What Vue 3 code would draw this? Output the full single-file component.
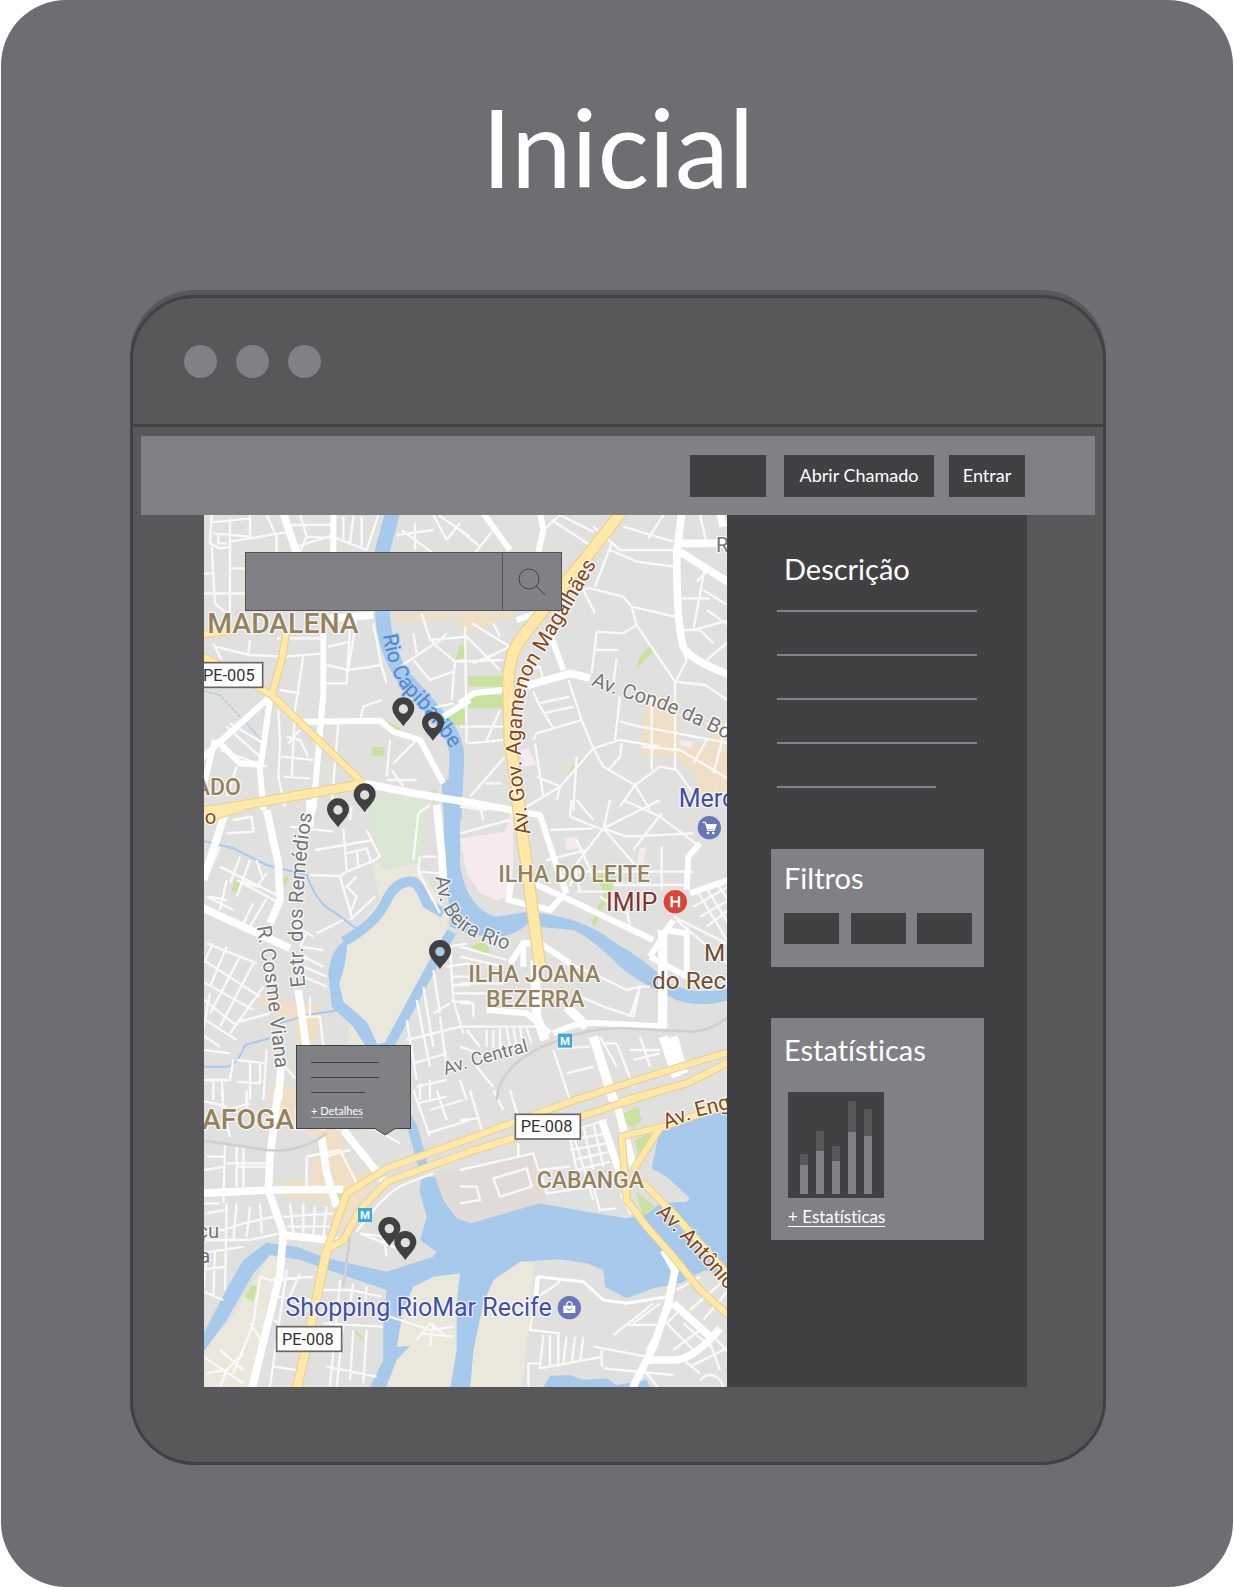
<script setup>
// Map artwork is drawn in six sheets; each entry is the sheet's origin.
const sheets = {
  a: [-12, -15], b: [768, -15],
  c: [-12, 855], d: [768, 855],
  e: [-12, 1725], f: [768, 1725],
}
const place = (s) => `translate(${sheets[s][0]} ${sheets[s][1]})`

// [kind, sheet, path data]
const areas = [
  ['sand', 'c', 'M515 180 L560 210 650 190 740 330 745 400 700 490 560 740 H445 V680 L415 550 440 420 540 300z'],
  ['sand', 'e', 'M210 495 L245 510 200 640 165 890 H0 V790 L90 690z M640 590 L700 560 780 550 770 640 775 780 750 890 H555 L590 800 600 680z'],
  ['sand', 'f', 'M100 570 L180 515 222 518 205 720 185 890 H28 L40 780 70 640z'],
  ['clay', 'e', 'M705 260 L1010 190 1020 250 1040 300 1020 345 880 380 800 400 760 380z'],
  ['tan', 'a', 'M580 315 L800 305 H940 V318 L880 330 L855 365 L830 345 L800 365 775 350 780 320 700 335 590 335z'],
  ['tan', 'b', 'M560 545 L660 570 655 690 740 710 780 630 805 640 V870 L700 850 710 800 640 740 540 735z'],
  ['tan', 'c', 'M170 600 L230 585 290 620 360 610 V660 L340 740 H290 L285 670 230 640z M210 850 L250 870 H290 V900 H210z'],
  ['tan', 'e', 'M225 -10 H290 V60 L330 120 H420 L440 190 470 260 545 220 530 260 460 370 430 420 385 400 400 340 270 325 240 300 245 275 330 270 340 210 380 170 300 110 230 60z'],
  ['pink', 'd', 'M0 115 L135 95 160 10 V200 L145 290 110 300 60 280 20 220z M315 115 L350 110 355 145 320 150z M540 145 L560 140 550 190 530 190z'],
  ['pink', 'b', 'M180 720 L205 715 230 765 190 770z M655 690 L700 695 695 715 660 705z'],
  ['park', 'c', 'M500 -10 H690 L655 185 570 210 530 140z'],
  ['green', 'b', 'M25 498 H130 V530 H25z M25 570 L60 555 H130 V595 H25z M570 408 L580 425 528 475 540 440z M325 795 L335 770 370 745z M0 400 L12 410 V450 L-15 455z M-45 610 L12 595 V645 H-20z'],
  ['green', 'a', 'M555 630 L605 658 580 663z M515 710 H553 V738 H515z M770 450 L800 390 V450z M735 625 L795 600 V645 H755z M700 835 L712 845 698 890z'],
  ['green', 'c', 'M95 270 L105 235 124 250 108 280z M250 232 L265 228 262 250 250 257z'],
  ['green', 'd', 'M405 215 L455 205 470 240 435 310 405 380 395 370 430 280z M30 440 L70 425 90 450 85 465z M300 555 L330 580 305 575z'],
  ['green', 'e', 'M135 620 L155 585 172 590 160 635z M410 310 L430 305 420 330z M450 712 L500 750 480 745z'],
  ['green', 'f', 'M490 70 L535 50 545 90 520 112 490 95z M525 150 L595 115 535 200z M525 300 L585 350 550 382z'],
  ['water', 'd', 'M-55 -60 H0 V200 Q25 330 110 350 L205 335 Q370 350 460 425 Q560 480 620 545 Q700 590 805 565 V600 Q720 625 650 600 Q540 550 480 500 Q390 410 340 390 L250 382 L205 370 Q160 410 110 410 Q30 410 -30 380z'],
  ['water', 'c', 'M440 420 Q445 470 418 550 L430 605 500 665 545 760 H510 L460 680 395 620 385 520 Q395 440 440 420z'],
  ['water', 'e', 'M0 750 L90 580 130 510 200 458 290 470 380 505 560 545 700 500 710 485 660 450 680 380 658 300 665 260 705 260 730 330 770 385 810 400 880 380 1020 340 1160 365 1280 385 1350 370 1420 400 1515 540 1440 580 1360 595 1280 625 1215 590 1210 540 1160 520 1080 508 960 515 880 570 850 640 820 780 810 900 H750 L770 780 770 640 780 550 700 560 640 590 610 660 590 770 630 768 590 810 555 900 H505 L550 810 550 700 560 600 400 545 300 510 210 495 160 550 80 690 0 800z'],
  ['water', 'f', 'M600 115 L805 60 V560 L730 540 555 378 600 340 680 335 690 325 625 265 575 235z M245 900 L270 858 330 855 370 870 440 865 470 885 560 870 575 900z'],
]

const streams = [
  ['w45', 'a', 'M580 0 L545 130 548 320 Q555 420 610 500 Q700 600 740 650 Q775 700 770 760 L762 930'],
  ['w45', 'c', 'M757 10 L752 180 Q760 300 810 360'],
  ['w30', 'c', 'M755 395 L700 490 560 750'],
  ['w30', 'c', 'M430 425 Q530 370 560 300 Q590 240 640 245 Q660 255 680 310 L730 340'],
  ['w30', 'e', 'M545 -140 L580 0 640 120 670 230'],
  ['w6', 'c', 'M0 120 L100 145 200 195 320 225 Q350 310 400 335 L475 390 M420 630 L320 645 240 670 M210 715 L135 735 Q110 800 80 800 H0'],
  ['w3', 'a', 'M0 540 L60 555 120 620 185 690'],
]

const minor = [
  ['a', 'M35 10 L30 100 60 115 90 110 M30 38 L150 25 M90 35 V310 M150 15 V80 L40 70 M90 175 H135 M0 250 H140 M0 190 L35 190 M35 110 L45 280 90 320 M55 70 V100 H80 M200 15 L230 80 230 125 M90 95 L270 65 M265 45 H395 M300 15 L320 80 300 125 M290 110 L400 75 M320 80 L410 85 500 120 M430 20 V90 M460 20 L450 100 M485 20 V110 M535 15 L500 120 M590 75 L700 60 M645 40 V120 M605 60 L700 130 M700 15 L740 90 M715 15 L810 80 M780 40 L740 90'],
  ['a', 'M40 400 L65 450 M45 410 L150 435 250 440 M150 390 L145 430 M230 385 H370 M255 440 L375 430 M310 440 L285 600 275 800 M240 540 L300 550 M385 410 L450 395 M380 465 L445 480 545 465 M450 350 L440 520 375 520 M470 320 L445 480 M520 340 L545 470 560 520 M545 570 L490 590 480 630 M415 640 L405 760 395 890 M300 660 L265 700 M80 650 L180 740 M90 640 L190 700 M260 680 L300 690 325 740 M235 600 L240 700 235 800 255 890 M245 740 L340 750 M250 800 L330 805 M110 770 L80 860 M60 720 L200 770 M570 690 L560 800 M580 760 L650 690 M560 810 H650 M575 780 L610 830'],
  ['a', 'M665 310 L690 390 800 380 M690 390 L705 400 600 470 M705 405 L765 455 795 450 M640 370 L650 430 M640 450 L690 510 760 485 M765 455 L755 570 M690 595 L760 580 M710 400 L740 370'],
  ['b', 'M0 60 L60 110 95 65 M60 110 L45 130 M250 60 L300 15 M275 30 L390 105 M300 15 L400 65 M400 50 L480 120 H645 M490 50 L640 95 M565 85 L610 15 M450 120 L530 155 645 170 M455 100 L405 230 M310 240 L390 235 490 260 515 290 645 320 M370 240 L405 310 M515 290 L530 345 645 515 M530 345 L490 370 410 365 395 490 M405 420 H475 M470 445 L460 520 M645 515 L735 525 810 575 M660 400 L680 450 645 520 V780 M720 15 L740 100 M735 170 L700 360 M660 265 H750 M700 360 L810 330 M730 240 L810 290 M660 360 H720 L760 400 M740 300 L805 345 M740 450 L805 395 M710 215 L740 185'],
  ['b', 'M0 455 L130 450 M15 350 L20 700 M35 340 L150 410 M20 380 L120 480 M40 460 L130 420 M70 450 L150 410 M0 650 H135 M25 700 L130 690 M120 600 L80 690 M135 740 L30 860 M75 820 H125 M210 480 L240 470 250 510 M220 545 L235 580 280 655 M235 580 L330 560 M250 610 L340 590 M220 690 L230 670 365 630 M325 510 L365 630 400 715 M400 715 L480 690 600 710 M400 715 L300 830 200 890 M400 715 L430 770 525 825 480 890 M485 700 L480 740 445 780 M480 560 L465 690 M480 635 L560 655 M525 825 L600 770 650 780 M525 825 L570 900 M350 740 L340 900 M225 700 L250 860 M230 800 L300 830 290 870 M700 850 L650 780 M100 340 L120 380 M575 560 V780 M545 650 L810 700 M545 710 L660 720 810 810 M740 640 L805 670 M700 760 L740 690 M760 790 L800 640'],
  ['c', 'M80 100 L160 95 155 50 100 60 M170 180 L190 240 M60 140 L20 230 M60 200 L240 290 M120 170 L90 250 M150 180 L110 290 M200 220 L170 260 130 245 M80 240 L60 330 M20 290 L100 330 M200 295 L150 380 M160 310 L130 370 M110 240 L240 310 M30 290 L80 300 M270 80 L400 95 M330 80 L345 30 M345 150 L520 120 M430 85 L440 210 M440 160 L500 145 515 190 M470 150 L475 200 M500 90 L540 170 515 185 440 215 420 228 330 225 M420 230 L455 350 M450 60 L455 20 M470 230 L440 260 470 290 450 340 M525 290 L450 360 M660 170 L655 215 720 220 M665 170 H710 M640 180 L655 40 690 15 M655 215 L720 340'],
  ['c', 'M20 430 L170 490 M10 480 L180 590 M0 540 L160 630 M0 590 L100 670 210 640 M0 650 L110 720 M0 700 L60 740 M40 430 L10 490 M80 440 L30 560 M120 470 L30 640 M160 490 L60 680 M190 560 L90 700 M30 580 L10 690 M310 340 L290 380 340 410 M300 440 L370 450 M310 470 L370 500 M310 500 L380 530 M310 530 L380 560 M320 400 L300 440 M350 400 L430 360 M330 590 V650 M360 650 L370 740 M300 650 H360 M10 750 L90 760 M40 840 V900 M65 840 L70 900 M10 840 H90 L100 780 M110 780 L200 790 M150 790 V900 M180 790 V850 L110 845 M200 750 L190 900 M255 800 L285 835'],
  ['c', 'M750 440 L800 430 M750 440 L760 600 790 700 M740 500 L810 490 M755 530 H810 M755 555 H810 M755 580 H810 M755 605 H810 M750 610 L700 640 M700 510 L720 640 M670 560 L700 740 M650 600 L690 800 M620 660 L650 840 M720 650 L740 800 M620 720 L780 680 M640 790 L740 760 M660 850 V900 M690 840 V900 M650 860 L740 840'],
  ['d', 'M0 20 L80 30 M60 20 L70 60 M0 100 L150 60 M335 0 L330 50 M330 50 L430 90 450 0 M270 90 L400 85 M430 85 L350 190 330 260 M430 85 L530 200 M430 85 L600 0 M430 85 L500 110 700 100 M350 120 L400 230 M400 60 L350 0 M490 0 L600 50 M605 40 L520 150 M600 50 L720 140 M605 140 V270 M260 180 L380 150 M310 215 H700 M350 275 H440 M360 275 L345 200 M460 255 H690 M500 330 L510 380 M420 290 L500 340 M640 350 L800 430 M620 390 L600 480 M650 360 L800 490 M710 270 L800 420 M740 265 L805 370 M700 320 L805 260 M720 350 L805 300 M740 380 L805 330 M770 250 L805 300'],
  ['d', 'M330 490 L440 540 500 570 540 560 520 650 430 620 340 580 M540 560 H570 M510 650 L540 560 M0 440 L140 480 M0 470 L130 500 M0 550 H130 M0 580 H80 M0 610 L40 610 V650 M0 680 H250 M80 690 V740 M100 690 V745 M120 685 V745 M140 685 L150 740 M160 685 L170 740 M180 685 L190 740 M200 685 L215 730 M20 690 L60 740 M0 740 L60 760 M280 750 L330 900 M290 745 L390 740 M470 730 L520 860 M420 710 L470 800 M430 730 H470 M510 750 H600 M520 780 L600 760 M540 710 L570 800 M0 840 L20 900 M50 800 L100 860 M320 820 L400 800'],
  ['e', 'M75 165 L70 340 M12 240 L75 230 M20 200 H70 M110 170 V290 M130 170 V290 M80 220 H200 M110 230 H205 M0 30 L80 50 M65 0 L70 60 90 140 M140 0 V60 M80 60 L150 40 M320 200 V290 M320 200 L420 180 470 280 M375 200 L450 180 M420 60 L600 160 M640 0 L690 140 M680 130 L810 90 M650 40 L740 20 M690 60 L790 30 M710 0 L740 90'],
  ['e', 'M10 340 H60 M20 370 L75 360 M10 420 L70 420 130 400 220 380 M80 340 L75 600 M110 340 L100 450 M150 350 L140 440 M180 340 L185 430 M0 450 L150 450 240 430 M0 490 L130 470 M0 540 L80 530 M20 500 L10 600 M45 480 L40 620 M0 600 L70 630 M250 380 L400 370 M270 340 L280 430 M310 340 V430 M345 350 L340 440 M260 410 H390 M380 350 L370 440 M180 560 L160 700 100 850 M180 560 L210 570 340 560 M260 540 L210 890 M300 550 L260 640 M230 620 L340 630 M220 690 L240 700 M150 700 L190 760 M20 850 L80 840 130 790 M60 780 L130 840 M10 800 L130 880 M80 840 L60 890 M220 780 L300 770 M220 830 L290 840 M340 600 L450 600 545 620 M420 570 L390 890 M460 580 L450 640 M500 590 L495 640 M370 700 L550 710 M430 700 L410 890 M380 830 L530 860 M460 720 L450 870 M500 720 L490 880 M480 430 L550 440 560 500 M480 430 L630 490 M470 425 Q560 300 620 280 L700 250'],
  ['e', 'M570 680 L690 720 760 710 M650 750 L690 700 740 740 M660 730 L760 740 M700 700 L690 770'],
  ['f', 'M0 90 L60 85 M30 0 L65 120 M100 0 L130 60 M150 0 L180 100 M175 160 V200 M0 240 L220 190 235 240 330 230 M100 265 L200 235 215 290 120 320z M0 290 L50 290 60 330 0 340 M330 100 L400 330 M340 120 L440 90 M330 150 L440 130 M330 180 L440 160 M340 210 L450 185 M350 240 L450 215 M370 110 L400 240 M400 100 L430 230 M240 240 L260 310 400 290 M400 290 L420 360 470 355 M330 145 L350 240 M230 560 L210 720 300 730 M235 620 L300 575'],
  ['f', 'M250 735 L240 835 430 800 M270 735 V830 M295 735 V830 M320 740 L310 820 M345 740 L335 820 M370 740 L360 815 M205 900 V820 H240 M400 770 L560 800 M425 780 V830 M430 835 L640 855 M460 735 L580 640 M520 700 L600 640 M505 705 H590 M600 680 L700 780 M640 640 L560 780 M620 700 L670 650 M640 780 L720 720 M670 700 L750 770 M690 830 L810 770 M670 810 L720 850 M730 690 L805 600 M690 660 L805 560 M650 600 L720 560 M750 730 L810 790 M750 760 L780 840 M720 870 Q750 840 780 870 L790 890 M560 850 L600 900'],
]

const roads = [
  ['r14', 'a', 'M400 10 V130 M370 370 V550 L340 900 M210 570 L180 780 190 900 M0 750 L210 560 M45 690 L10 830 M50 690 L120 760 190 765 M310 635 L540 632 580 665 660 690 730 820 M730 620 L810 570'],
  ['r20', 'a', 'M250 10 L290 130 M390 325 L520 315 M490 820 L640 850 820 880'],
  ['r14', 'b', 'M70 10 L150 120 M240 10 L250 60 235 125 M0 870 L160 900 M0 580 L40 550 130 540 M170 330 L230 310 M270 370 L310 480'],
  ['r20', 'b', 'M190 530 L330 490 390 505 M665 10 L650 130 Q650 350 670 410 Q690 450 810 495 M660 100 L810 100 M660 125 L810 220 M780 10 L790 50'],
  ['r20', 'c', 'M75 40 L10 240 M0 320 L270 445 M200 30 L235 190 240 300 210 370 M330 0 V80 M295 570 L320 750 M245 780 L235 900 M710 15 L725 160 730 240'],
  ['r14', 'd', 'M0 5 L150 30 240 45 290 200 320 280 M220 250 L330 300 580 420 M155 240 L145 300 270 330 310 285 M690 280 L805 240 M720 130 L685 170 680 270 M570 470 L640 360 M570 470 L680 530 V400 L610 390 M150 490 L190 430 H240 L330 490 M190 440 V500 M80 630 L200 640 270 700'],
  ['r26', 'd', 'M608 390 V680 M640 710 L670 820 M610 710 L650 830'],
  ['r26', 'd', 'M225 480 L230 650 255 720 M320 620 L380 680 M400 710 L460 900'],
  ['r14', 'd', 'M280 700 Q360 660 430 670 L620 680'],
  ['r20', 'e', 'M235 0 L210 200 205 300 250 430 240 550 155 900 M0 310 L205 300 430 298 M365 140 L380 250 410 350 M250 435 L430 455 M430 120 L530 245 M545 265 L560 290'],
  ['r20', 'f', 'M455 20 L470 40 520 230 M425 90 L480 250 M490 310 L520 370 M610 480 L645 540 625 640 580 770 515 900 M640 640 L750 740 M560 810 H650 Q710 800 780 715'],
  ['r8', 'f', 'M230 620 L235 560 370 575 430 630 500 640 620 620'],
  ['rail', 'd', 'M110 900 Q120 780 300 720 Q400 680 500 685 L700 695 Q760 690 805 650'],
  ['rail', 'e', 'M0 150 L200 180 Q300 190 380 130 M450 440 L430 590'],
]

const highways = [
  ['h22', 'a', 'M0 435 L90 480 215 555 490 820 M0 375 L110 360 M258 370 L245 450 215 555'],
  ['h30', 'a', 'M0 905 L130 885 490 822'],
  ['h30', 'c', 'M0 58 L130 20'],
  ['h36', 'b', 'M485 5 L380 140 290 250 180 390 Q145 440 145 520 L150 700 180 900'],
  ['h36', 'd', 'M170 -10 L195 160 240 500'],
  ['h22', 'd', 'M330 905 L580 825 810 755 M480 905 L680 850 810 785'],
  ['h22', 'e', 'M290 900 L330 720 380 480 440 310 560 235 810 145 1110 35 M380 480 L430 450 480 360 560 275 810 185 1110 90 1420 -10'],
  ['h30', 'e', 'M290 900 L330 720 380 480'],
  ['h22', 'f', 'M480 140 L610 110 810 40 M485 140 L500 330 560 410 640 500 720 600 810 680 M605 105 L520 240 M510 270 L550 280 640 370 810 560'],
]

const labels = [
  ['place big', 'a', 22, 370, 'MADALENA'],
  ['place mid', 'a', -54, 855, 'LADO'],
  ['road dark', 'c', 14, 72, 'o'],
  ['place mid', 'd', 115, 245, 'ILHA DO LEITE'],
  ['place mid', 'd', 25, 547, 'ILHA JOANA'],
  ['place mid', 'd', 78, 622, 'BEZERRA'],
  ['place big', 'e', 6, 118, 'AFOGADOS'],
  ['place mid', 'f', 230, 295, 'CABANGA'],
  ['health', 'd', 438, 333, 'IMIP'],
  ['museum', 'd', 732, 482, 'M'],
  ['museum', 'd', 576, 566, 'do Recife'],
  ['shop', 'b', 656, 890, 'Mercado'],
  ['shop', 'e', 256, 678, 'Shopping RioMar Recife'],
  ['road', 'b', 768, 126, 'R.'],
  ['road', 'e', -8, 444, 'çu'],
  ['road', 'e', -2, 520, 'a'],
]

// Street and river names that follow their course.
const curved = [
  ['river', 'rio', 'M537 360 Q550 460 600 530 Q690 610 800 795', 'Rio Capibaribe'],
  ['road dark wide', 'agamenon', 'M980 956 Q940 750 954 620 Q960 500 1010 430 L1200 110', 'Av. Gov. Agamenon Magalhães'],
  ['road', 'conde', 'M1160 510 Q1260 550 1350 575 Q1460 615 1700 740', 'Av. Conde da Boa Vista'],
  ['road', 'remedios', 'M304 1415 Q280 1180 325 890', 'Estr. dos Remédios'],
  ['road', 'cosme', 'M158 1235 L185 1400 L214 1660', 'R. Cosme Viana'],
  ['road', 'beira', 'M694 1085 Q706 1200 770 1245 Q820 1280 930 1310', 'Av. Beira Rio'],
  ['road small', 'central', 'M724 1680 L820 1650 L1000 1602', 'Av. Central'],
  ['road dark wide', 'eng', 'M1386 1842 L1480 1806 L1640 1765', 'Av. Eng. José'],
  ['road dark wide', 'antonio', 'M1354 2095 Q1450 2180 1640 2410', 'Av. Antônio de Góes'],
]

const shields = [['a', -30, 458, 218], ['f', 166, 73, 195], ['e', 230, 710, 195]]
const shieldNames = ['PE-005', 'PE-008', 'PE-008']
const metros = [['d', 294, 701], ['e', 474, 354]]
const pins = [[598, 582], [687, 625], [482, 840], [402, 885], [708, 1310], [556, 2141], [604, 2183]]

const stats = [
  { total: 40, part: 29 },
  { total: 63, part: 43 },
  { total: 48, part: 33 },
  { total: 93, part: 62 },
  { total: 85, part: 58 },
]
</script>

<template>
  <main class="page">
    <h1>Inicial</h1>
    <div class="shell">
      <div class="browser">
        <div class="chrome"><i></i><i></i><i></i></div>
        <header class="topbar">
          <button type="button" class="btn" aria-label="Menu"></button>
          <button type="button" class="btn wide">Abrir Chamado</button>
          <button type="button" class="btn">Entrar</button>
        </header>
        <div class="content">
          <section class="map" aria-label="Mapa">
            <svg class="canvas" viewBox="0 0 1569 2616">
              <path v-for="(p, i) in areas" :key="'a' + i" :class="p[0]" :transform="place(p[1])" :d="p[2]" />
              <path v-for="(p, i) in streams" :key="'s' + i" class="stream" :class="p[0]" :transform="place(p[1])" :d="p[2]" />
              <path v-for="(p, i) in minor" :key="'m' + i" class="minor" :transform="place(p[0])" :d="p[1]" />
              <path v-for="(p, i) in roads" :key="'r' + i" class="street" :class="p[0]" :transform="place(p[1])" :d="p[2]" />
              <path v-for="(p, i) in highways" :key="'c' + i" class="casing" :class="p[0]" :transform="place(p[1])" :d="p[2]" />
              <path v-for="(p, i) in highways" :key="'h' + i" class="highway" :class="p[0]" :transform="place(p[1])" :d="p[2]" />

              <text v-for="(t, i) in labels" :key="'t' + i" :class="t[0]" :transform="place(t[1])" :x="t[2]" :y="t[3]">{{ t[4] }}</text>
              <defs>
                <path v-for="c in curved" :id="c[1]" :key="c[1]" :d="c[2]" />
              </defs>
              <text v-for="c in curved" :key="'k' + c[1]" :class="c[0]"><textPath :href="'#' + c[1]">{{ c[3] }}</textPath></text>

              <g v-for="(s, i) in shields" :key="'p' + i" :transform="place(s[0])">
                <rect class="shield" :x="s[1]" :y="s[2]" :width="s[3]" height="74" />
                <text class="code" :x="s[1] + s[3] - 24" :y="s[2] + 54">{{ shieldNames[i] }}</text>
              </g>
              <g v-for="(m, i) in metros" :key="'u' + i" :transform="place(m[0])">
                <rect class="metro" :x="m[1]" :y="m[2]" width="42" height="42" />
                <text class="metro-m" :x="m[1] + 21" :y="m[2] + 33">M</text>
              </g>
              <g transform="translate(1516 938)">
                <circle class="poi" r="35" />
                <path class="white-line" d="M-20 -16 h8 l8 24 h18 l6 -16 h-28" />
                <path class="white" d="M-10 -10 H20 L14 5 H-4z" />
                <circle class="white" cx="-4" cy="16" r="4" /><circle class="white" cx="12" cy="16" r="4" />
              </g>
              <g transform="translate(1096 2378)">
                <circle class="poi" r="35" />
                <path class="white-line" d="M-8 -6 V-12 Q0 -24 8 -12 V-6" />
                <path class="white" d="M-18 -6 H18 V16 H-18z" />
                <path class="smile" d="M-8 2 Q0 12 8 2" />
              </g>
              <g transform="translate(1414 1160)">
                <circle class="hospital" r="35" />
                <path class="h-mark" d="M-11 -17 V17 M11 -17 V17 M-11 0 H11" />
              </g>
              <path
                v-for="(p, i) in pins" :key="'n' + i" class="pin" fill-rule="evenodd"
                :transform="`translate(${p[0]} ${p[1]})`"
                d="M0 52 C-12 34 -33 18 -33 -2 A33 33 0 0 1 33 -2 C33 18 12 34 0 52z M14 0 A14 14 0 1 0 -14 0 A14 14 0 1 0 14 0z"
              />
            </svg>
            <form class="search" @submit.prevent>
              <input type="search" aria-label="Buscar no mapa" />
              <button type="submit" aria-label="Buscar">
                <svg viewBox="0 0 28 28" width="28" height="28"><circle cx="11" cy="11" r="10" /><path d="M18 18 L27 27" /></svg>
              </button>
            </form>
            <div class="popup">
              <span></span><span></span><span class="short"></span>
              <a href="#detalhes">+ Detalhes</a>
              <svg class="tail" viewBox="0 0 22 8" width="22" height="8"><path class="tail-fill" d="M0 0 H22 L11 7z" /><path class="tail-edge" d="M0 0 L11 7 22 0" /></svg>
            </div>
          </section>
          <aside class="panel">
            <section class="about">
              <h2>Descrição</h2>
              <div class="rules"><span></span><span></span><span></span><span></span><span class="short"></span></div>
            </section>
            <section class="card">
              <h2>Filtros</h2>
              <div class="filters">
                <button v-for="n in 3" :key="n" type="button" :aria-label="'Filtro ' + n"></button>
              </div>
            </section>
            <section class="card stats">
              <h2>Estatísticas</h2>
              <div class="chart">
                <div v-for="(s, i) in stats" :key="i" class="bar" :style="{ height: s.total + 'px' }">
                  <b :style="{ height: s.part + 'px' }"></b>
                </div>
              </div>
              <a href="#estatisticas">+ Estatísticas</a>
            </section>
          </aside>
        </div>
      </div>
    </div>
  </main>
</template>

<style>
body { margin: 0; background: #fff; }
</style>

<style scoped>
* { box-sizing: border-box; }
.page {
  margin: 0 1px;
  padding: 80px 127px 122px 129px;
  border-radius: 65px;
  background: #6d6e71;
  color: #fff;
  font-family: Lato, "Open Sans", sans-serif;
  font-variant-ligatures: none;
}
h1 { margin: 0 0 78px; font-size: 108px; line-height: 132px; font-weight: 400; text-align: center; }
.shell { padding-top: 5px; border-radius: 65px; background: #58585a; }
.browser { border: 3px solid #414042; border-radius: 65px; padding-bottom: 75px; background: #58585a; }
.chrome { display: flex; align-items: center; gap: 19px; height: 129px; padding: 0 51px; border-bottom: 3px solid #414042; }
.chrome i { width: 33px; height: 33px; border-radius: 50%; background: #808184; }
.topbar {
  display: flex; justify-content: flex-end; align-items: center;
  height: 79px; margin: 9px 8px 0; padding-right: 70px; background: #808184;
}
button { padding: 0; border: 0; background: #414143; color: #fff; font-family: inherit; cursor: pointer; }
.btn { width: 76px; height: 42px; margin-left: 15px; padding-bottom: 2px; font-size: 18px; }
.btn.wide { width: 150px; margin-left: 18px; }
.content { display: flex; padding: 0 76px 0 71px; }
.map { position: relative; flex: 1; overflow: hidden; background: #e0e0df; }
.canvas { display: block; width: 100%; height: auto; }
.panel { width: 300px; padding: 38px 43px 0 44px; background: #414143; }
h2 { margin: 0; font-size: 29px; line-height: 32px; font-weight: 400; }
.about { height: 296px; }
.about h2 { padding-left: 13px; }
.rules { display: flex; flex-direction: column; gap: 42px; margin: 25px 12px 0 6px; }
.rules span { height: 2px; width: 200px; background: #808184; }
.rules .short { width: 159px; }
.card { height: 118px; padding: 13px 12px 0 13px; background: #808184; }
.filters { display: flex; justify-content: space-between; margin-top: 19px; }
.filters button { width: 55px; height: 31px; }
.stats { height: 222px; margin-top: 51px; padding: 16px 13px 0; }
.chart { display: flex; align-items: flex-end; gap: 8px; width: 96px; height: 106px; margin: 26px 0 0 4px; padding: 0 12px 4px; background: #414143; }
.bar { display: flex; align-items: flex-end; width: 8px; background: #58585a; }
.bar b { width: 100%; background: #808184; }
.stats a { display: inline-block; margin: 9px 0 0 4px; border-bottom: 1px solid #fff; color: #fff; font-size: 17px; line-height: 19px; text-decoration: none; }

.search { position: absolute; top: 37px; left: 41px; display: flex; width: 317px; height: 59px; }
.search input { flex: 1; min-width: 0; border: 1px solid #525254; border-radius: 0; background: #808184; color: #fff; padding: 0 12px; font: 18px Lato, sans-serif; appearance: none; }
.search button { display: flex; align-items: center; justify-content: center; width: 59px; border: 1px solid #525254; border-left: 0; background: #808184; }
.search svg { fill: none; stroke: #414143; stroke-width: 1; }
.popup { position: absolute; top: 530px; left: 92px; width: 115px; height: 84px; padding: 16px 0 0 14px; border: 1px solid #414143; background: #808184; }
.popup span { display: block; width: 68px; height: 1px; margin-bottom: 14px; background: #414143; }
.popup .short { width: 54px; margin-bottom: 11px; }
.popup a { display: block; width: max-content; border-bottom: 1px solid #bcbdbf; color: #fff; font-size: 11px; line-height: 13px; text-decoration: none; }
.tail { position: absolute; right: 14px; bottom: -8px; }
.tail-fill { fill: #808184; }
.tail-edge { fill: none; stroke: #414143; }

.sand { fill: #eae8dc; }
.clay { fill: #e0dbd6; }
.tan { fill: #f0dfc7; }
.pink { fill: #f7eaef; }
.park { fill: #dae7d2; }
.green { fill: #cae2a0; }
.water { fill: #a6c9ec; }
.stream, .minor, .street, .casing, .highway { fill: none; stroke-linejoin: round; }
.stream { stroke: #a6c9ec; }
.w45 { stroke-width: 44; }
.w30 { stroke-width: 30; }
.w6 { stroke-width: 6; }
.w3 { stroke-width: 4; stroke-dasharray: 10 4; }
.minor { stroke: #f9f9f9; stroke-width: 7; }
.street { stroke: #fff; }
.r8 { stroke-width: 9; }
.r14 { stroke-width: 18; }
.r20 { stroke-width: 23; }
.r26 { stroke-width: 28; }
.street.rail { stroke: #d0d0d1; stroke-width: 8; }
.casing { stroke: #ead08c; }
.highway { stroke: #ffe8a8; }
.h22 { stroke-width: 24; }
.h30 { stroke-width: 30; }
.h36 { stroke-width: 38; }
.highway.h22 { stroke-width: 18; }
.highway.h30 { stroke-width: 24; }
.highway.h36 { stroke-width: 31; }
.canvas text { font-family: Roboto, sans-serif; paint-order: stroke; stroke: #fff; stroke-width: 8; stroke-opacity: 0.75; stroke-linejoin: round; }
.canvas .place { fill: #94835c; font-weight: 500; }
.canvas .big { font-size: 85px; }
.canvas .mid { font-size: 69px; }
.canvas .road { fill: #757575; font-size: 61px; }
.canvas .wide { font-size: 63px; }
.canvas .small { font-size: 55px; }
.canvas .dark { fill: #85491a; }
.canvas .river { fill: #4f88cc; font-size: 63px; stroke: #a6c9ec; }
.canvas .health { fill: #7d342f; font-size: 75px; }
.canvas .museum { fill: #744f2e; font-size: 73px; }
.canvas .shop { fill: #414fa8; font-size: 75px; }
.shield { fill: #fff; stroke: #666; stroke-width: 5; }
.canvas .code { fill: #333; font-size: 49px; text-anchor: end; stroke: none; }
.metro { fill: #3fa9de; }
.canvas .metro-m { fill: #fff; font-size: 34px; font-weight: 700; text-anchor: middle; stroke: none; }
.poi { fill: #6b75b9; }
.hospital { fill: #db4437; }
.white { fill: #fff; }
.white-line { fill: none; stroke: #fff; stroke-width: 4; }
.smile { fill: none; stroke: #6b75b9; stroke-width: 3; }
.h-mark { fill: none; stroke: #fff; stroke-width: 7; }
.pin { fill: #414143; }
</style>
